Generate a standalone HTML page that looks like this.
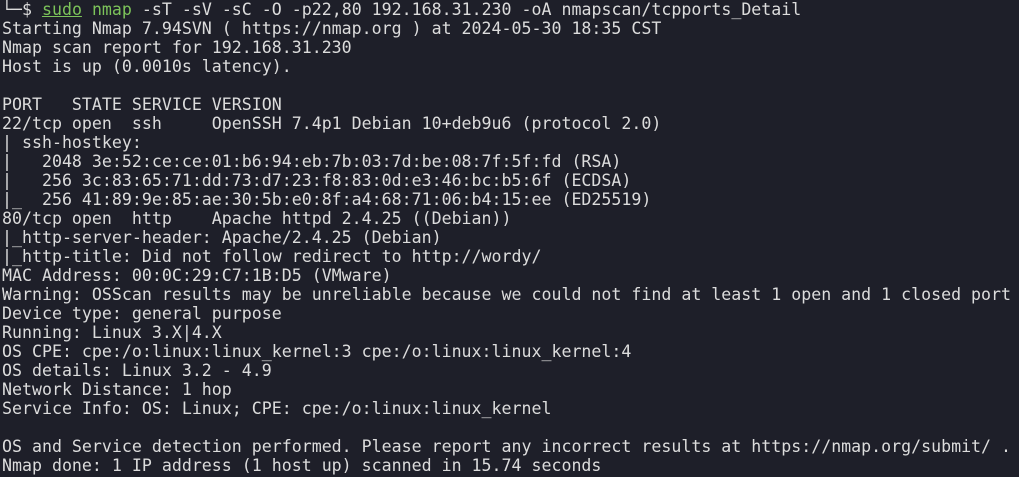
<!DOCTYPE html>
<html><head><meta charset="utf-8"><style>
html,body{margin:0;padding:0;background:#1e1f29;width:1019px;height:477px;overflow:hidden}
pre{margin:0;position:absolute;left:2px;top:0px;font-family:"DejaVu Sans Mono","Liberation Mono",monospace;font-size:16.6px;line-height:19px;color:#dcdcdc;white-space:pre}
.g{color:#7cc35a}.u{text-decoration:underline}
</style></head><body><pre>└─$ <span class="g u">sudo</span> <span class="g">nmap</span> -sT -sV -sC -O -p22,80 192.168.31.230 -oA nmapscan/tcpports_Detail
Starting Nmap 7.94SVN ( https://nmap.org ) at 2024-05-30 18:35 CST
Nmap scan report for 192.168.31.230
Host is up (0.0010s latency).

PORT   STATE SERVICE VERSION
22/tcp open  ssh     OpenSSH 7.4p1 Debian 10+deb9u6 (protocol 2.0)
| ssh-hostkey: 
|   2048 3e:52:ce:ce:01:b6:94:eb:7b:03:7d:be:08:7f:5f:fd (RSA)
|   256 3c:83:65:71:dd:73:d7:23:f8:83:0d:e3:46:bc:b5:6f (ECDSA)
|_  256 41:89:9e:85:ae:30:5b:e0:8f:a4:68:71:06:b4:15:ee (ED25519)
80/tcp open  http    Apache httpd 2.4.25 ((Debian))
|_http-server-header: Apache/2.4.25 (Debian)
|_http-title: Did not follow redirect to http://wordy/
MAC Address: 00:0C:29:C7:1B:D5 (VMware)
Warning: OSScan results may be unreliable because we could not find at least 1 open and 1 closed port
Device type: general purpose
Running: Linux 3.X|4.X
OS CPE: cpe:/o:linux:linux_kernel:3 cpe:/o:linux:linux_kernel:4
OS details: Linux 3.2 - 4.9
Network Distance: 1 hop
Service Info: OS: Linux; CPE: cpe:/o:linux:linux_kernel

OS and Service detection performed. Please report any incorrect results at https://nmap.org/submit/ .
Nmap done: 1 IP address (1 host up) scanned in 15.74 seconds</pre></body></html>
